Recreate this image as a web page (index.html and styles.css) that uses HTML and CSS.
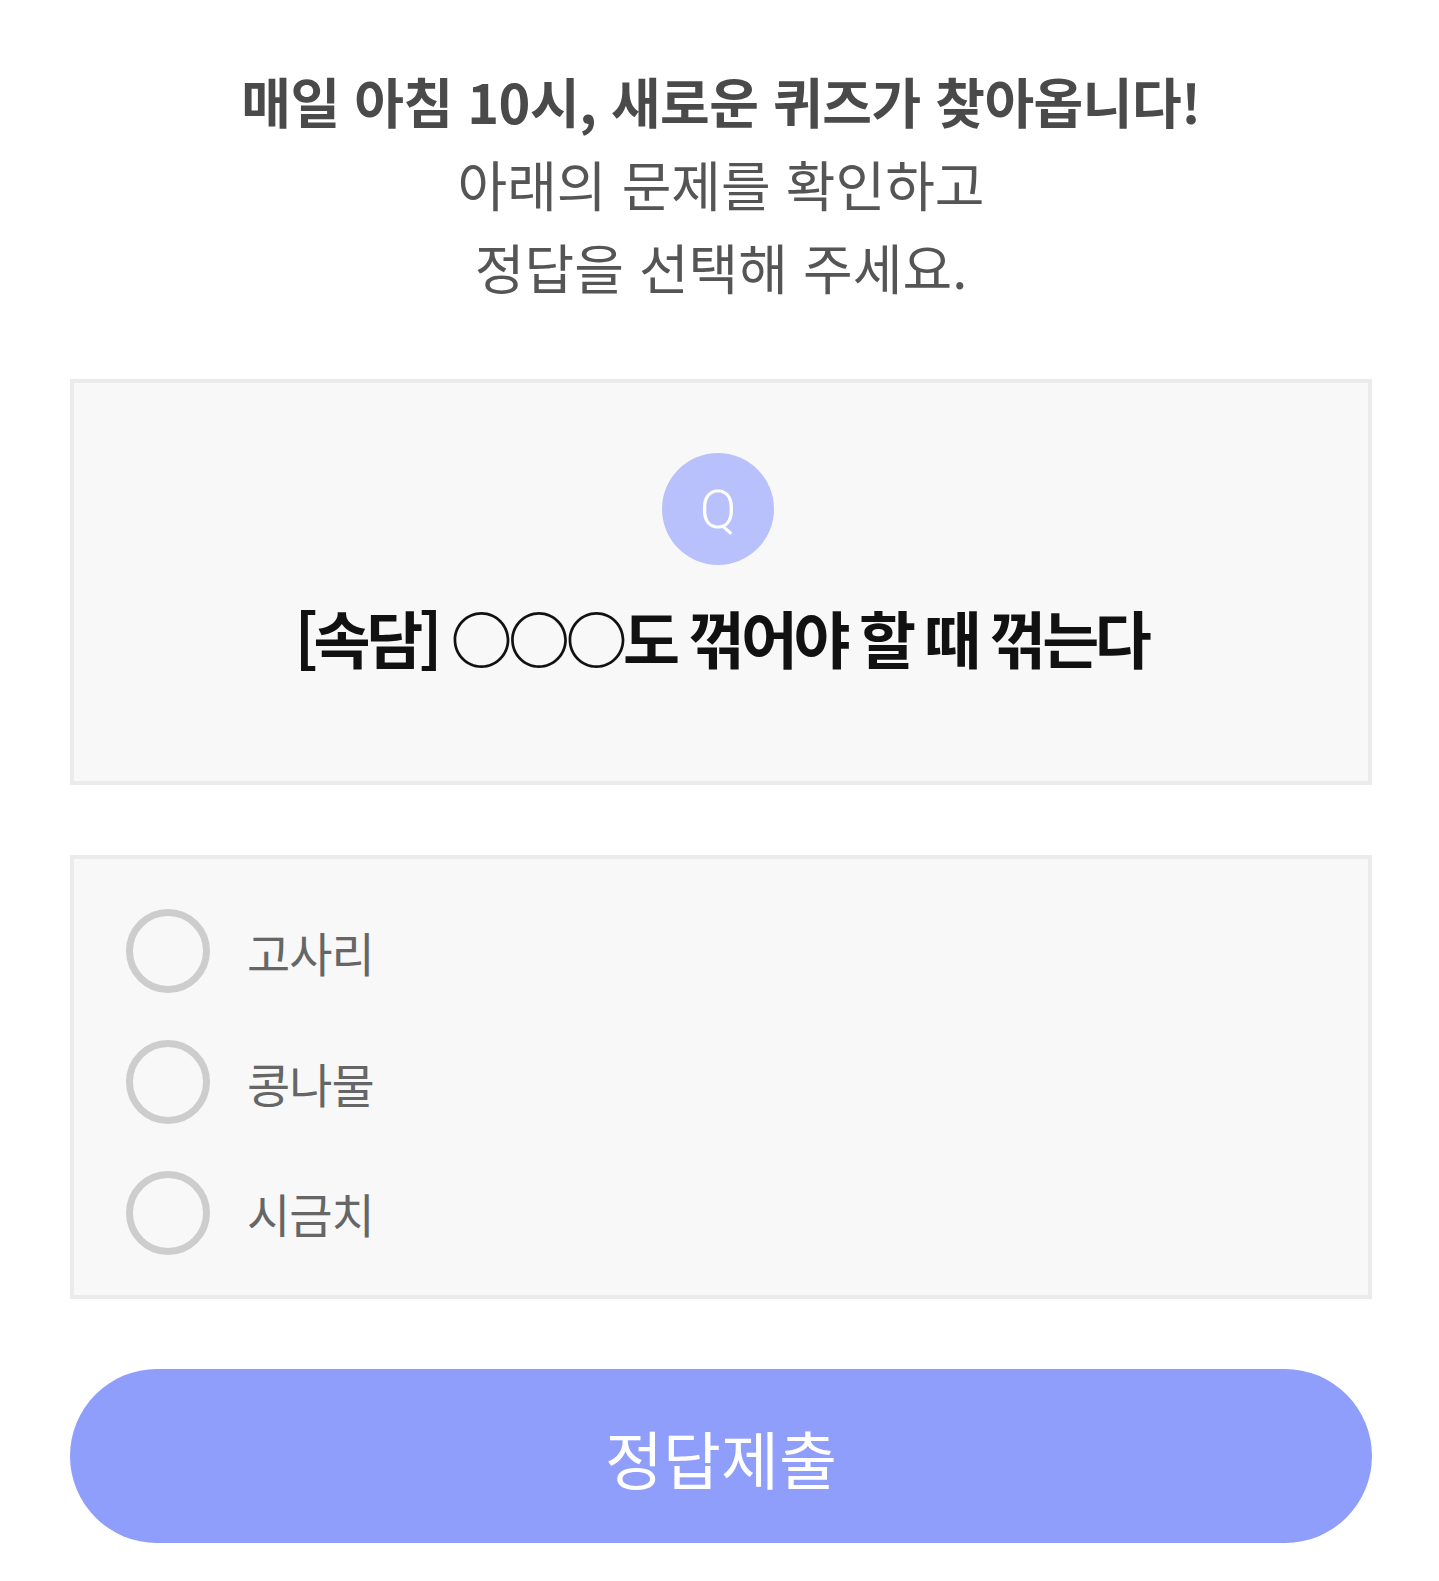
FILE: index.html
```html
<!DOCTYPE html>
<html lang="ko">
<head>
  <meta charset="UTF-8" />
  <meta name="viewport" content="width=device-width, initial-scale=1.0" />
  <title>오늘의 퀴즈</title>
  <link rel="stylesheet" href="styles.css">
</head>
<body>
  <div class="quiz-page">
    <div class="intro">
      <p class="intro-title">매일 아침 10시, 새로운 퀴즈가 찾아옵니다!</p>
      <p class="intro-desc">아래의 문제를 확인하고<br>정답을 선택해 주세요.</p>
    </div>

    <div class="question-box">
      <div class="q-badge">Q</div>
      <div class="question">[속담] ○○○도 꺾어야 할 때 꺾는다</div>
    </div>

    <form class="answer-form" id="quiz-form">
      <div class="options">
        <label class="option">
          <input type="radio" name="answer" value="1">
          <span class="radio"></span>
          <span class="option-text">고사리</span>
        </label>
        <label class="option">
          <input type="radio" name="answer" value="2">
          <span class="radio"></span>
          <span class="option-text">콩나물</span>
        </label>
        <label class="option">
          <input type="radio" name="answer" value="3">
          <span class="radio"></span>
          <span class="option-text">시금치</span>
        </label>
      </div>
      <button type="submit" class="submit-btn">정답제출</button>
    </form>
  </div>
</body>
</html>
```

FILE: styles.css
```css
:root {
  --line: #ebebeb;
  --box-bg: #f8f8f8;
  --accent: #8f9dfb;
  --accent-light: #b9c1fc;
  --text: #4d4d4d;
}
html, body { margin: 0; padding: 0; background: #fff; }
body {
  font-family: "Noto Sans CJK KR", "Noto Sans", sans-serif;
  color: var(--text);
}
.quiz-page {
  display: flex;
  flex-direction: column;
  padding: 59px 67px 36px 70px;
}
.intro { text-align: center; }
.intro p { margin: 0; font-size: 54px; line-height: 83px; }
.intro-title { font-weight: 700; color: #4a4a4a; letter-spacing: -0.5px; }
.intro-desc { color: #555; }

.question-box {
  margin-top: 71px;
  height: 406px;
  box-sizing: border-box;
  border: 4px solid var(--line);
  background: var(--box-bg);
  display: flex;
  flex-direction: column;
  align-items: center;
  padding-top: 70px;
}
.q-badge {
  width: 112px;
  height: 112px;
  margin-right: 6px;
  border-radius: 50%;
  background: var(--accent-light);
  color: #fff;
  font-family: Roboto, "Noto Sans", sans-serif;
  font-size: 54px;
  font-weight: 300;
  display: flex;
  align-items: center;
  justify-content: center;
}
.question {
  margin-top: 27px;
  font-size: 62px;
  line-height: 90px;
  font-weight: 700;
  color: #111;
  letter-spacing: -4.5px;
}

.answer-form { display: flex; flex-direction: column; }
.options {
  margin-top: 70px;
  height: 444px;
  box-sizing: border-box;
  border: 4px solid var(--line);
  background: var(--box-bg);
  padding: 27px 52px 17px;
  display: flex;
  flex-direction: column;
}
.option {
  height: 131px;
  display: flex;
  align-items: center;
  gap: 37px;
  cursor: pointer;
}
.option input { display: none; }
.radio {
  width: 84px;
  height: 84px;
  box-sizing: border-box;
  border: 7px solid #cdcdcd;
  border-radius: 50%;
  flex-shrink: 0;
}
.option input:checked + .radio { border-color: var(--accent); }
.option-text { font-size: 47px; color: #666; letter-spacing: -1px; }

.submit-btn {
  margin-top: 70px;
  height: 174px;
  border: none;
  border-radius: 87px;
  background: var(--accent);
  color: #fff;
  font-family: inherit;
  font-size: 63px;
  cursor: pointer;
}
```
